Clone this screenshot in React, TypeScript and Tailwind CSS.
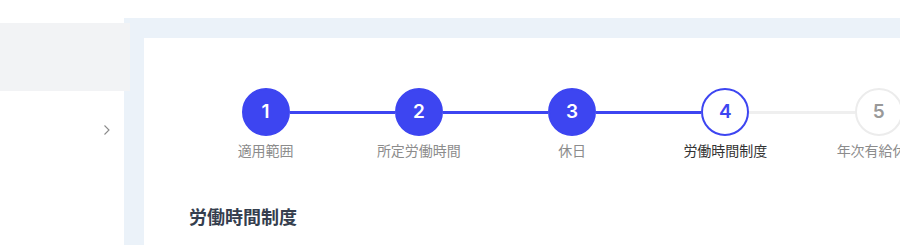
import React from "react";

const steps = [
  { n: 1, label: "適用範囲", state: "done" },
  { n: 2, label: "所定労働時間", state: "done" },
  { n: 3, label: "休日", state: "done" },
  { n: 4, label: "労働時間制度", state: "current" },
  { n: 5, label: "年次有給休暇", state: "todo" },
  { n: 6, label: "休暇", state: "todo" },
];

export default function App() {
  return (
    <div
      className="w-[900px] h-[245px] overflow-hidden bg-white flex flex-col"
      style={{ fontFamily: '"Noto Sans", "Noto Sans CJK JP", sans-serif' }}
    >
      <div className="h-[18px] shrink-0 bg-white" />
      <div className="flex flex-1 min-h-0">
        <aside className="w-[124px] shrink-0 bg-white flex flex-col">
          <div className="h-[5px]" />
          <div className="h-[68px] bg-[#f2f3f5] w-[130px] relative z-10" />
          <div className="flex justify-end pr-[13px] pt-[33px]">
            <svg width="8" height="12" viewBox="0 0 8 12" fill="none">
              <path d="M1.5 1.5 L6 6 L1.5 10.5" stroke="#8a8a8a" strokeWidth="1.1" />
            </svg>
          </div>
        </aside>
        <main className="flex-1 bg-[#ebf2f9] pl-[20px] pt-[20px] min-w-0">
          <div className="bg-white h-full pl-[45px] pt-[50px] overflow-hidden">
            <div className="flex w-[1000px]">
              {steps.map((s, i) => {
                const leftColor =
                  i === 0 ? "bg-transparent" : steps[i - 1].state === "done" ? "bg-[#3d45f1]" : "bg-[#efefef]";
                const rightColor = s.state === "done" ? "bg-[#3d45f1]" : "bg-[#efefef]";
                const circle =
                  s.state === "done"
                    ? "bg-[#3d45f1] text-white border-[#3d45f1]"
                    : s.state === "current"
                    ? "bg-white text-[#3d45f1] border-[#3d45f1]"
                    : "bg-white text-[#999999] border-[#ececec]";
                return (
                  <div key={s.n} className="w-[153.25px] shrink-0 flex flex-col items-center">
                    <div className="flex items-center w-full h-[48px]">
                      <div className={`flex-1 h-[3px] ${leftColor}`} />
                      <div
                        className={`w-[48px] h-[48px] rounded-full border-2 flex items-center justify-center text-[19px] font-semibold ${circle}`}
                        style={{ fontFamily: "Inter, sans-serif" }}
                      >
                        {s.n}
                      </div>
                      <div className={`flex-1 h-[3px] ${rightColor}`} />
                    </div>
                    <div
                      className={`mt-[5px] text-[14px] leading-[20px] whitespace-nowrap ${
                        s.state === "current" ? "text-[#333333]" : "text-[#8c8c8c]"
                      }`}
                    >
                      {s.label}
                    </div>
                  </div>
                );
              })}
            </div>
            <h2 className="mt-[44px] text-[18px] leading-[24px] font-bold text-[#353e4e]">労働時間制度</h2>
          </div>
        </main>
      </div>
    </div>
  );
}
